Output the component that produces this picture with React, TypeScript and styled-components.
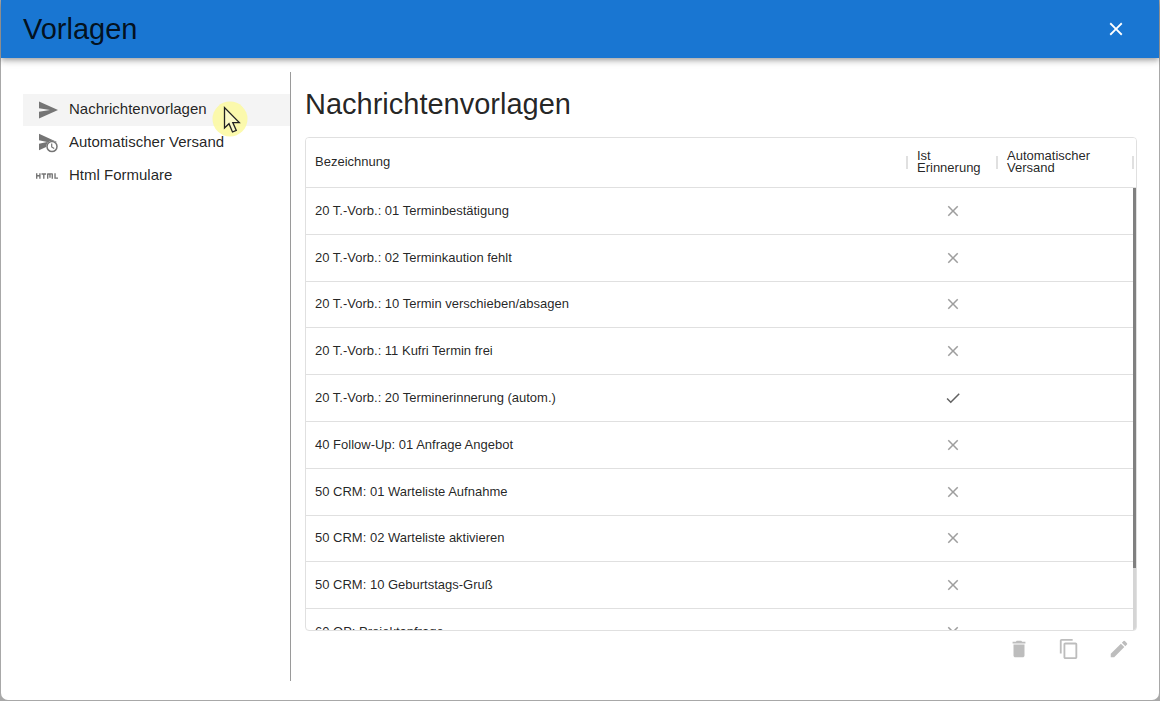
import React from "react";
import styled, { createGlobalStyle } from "styled-components";
import {
  MdCheck,
  MdClose,
  MdContentCopy,
  MdDelete,
  MdEdit,
  MdHtml,
} from "react-icons/md";

const GlobalStyle = createGlobalStyle`
  *, *::before, *::after { box-sizing: border-box; }
  html, body, #root { height: 100%; }
  body {
    margin: 0;
    background: #a8a8a8;
    font-family: "Liberation Sans", Arial, sans-serif;
    color: rgba(0, 0, 0, 0.87);
  }
`;

const Backdrop = styled.div`
  display: flex;
  height: 100%;
  padding: 0 1px 1px;
`;

const Dialog = styled.section`
  display: flex;
  flex-direction: column;
  flex: 1;
  min-width: 0;
  background: #fff;
  border-radius: 0 0 7px 7px;
`;

const AppBar = styled.header`
  display: flex;
  align-items: center;
  justify-content: space-between;
  flex-shrink: 0;
  height: 58px;
  padding: 0 25px 0 22px;
  background: #1976d2;
  box-shadow: 0 2px 4px -1px rgba(0, 0, 0, 0.2), 0 4px 5px 0 rgba(0, 0, 0, 0.14),
    0 1px 10px 0 rgba(0, 0, 0, 0.12);
`;

const Title = styled.h1`
  margin: 0;
  font-size: 29px;
  line-height: 32px;
  font-weight: 400;
`;

const IconButton = styled.button<{ $color: string }>`
  display: flex;
  align-items: center;
  justify-content: center;
  width: 36px;
  height: 36px;
  padding: 0;
  border: 0;
  background: none;
  color: ${(p) => p.$color};
  font-size: 22px;
`;

const Body = styled.div`
  display: flex;
  flex: 1;
  min-height: 0;
  padding: 14px 22px 19px;
`;

const Sidebar = styled.nav`
  display: flex;
  flex-direction: column;
  gap: 1px;
  flex: 0 0 268px;
  padding-top: 22px;
  border-right: 1px solid #9a9a9a;
`;

const NavItem = styled.a<{ $active?: boolean }>`
  position: relative;
  display: flex;
  align-items: center;
  gap: 11px;
  height: 32px;
  padding: 0 13px;
  background: ${(p) => (p.$active ? "#f4f4f4" : "transparent")};
  color: rgba(0, 0, 0, 0.87);
  font-size: 15px;
  line-height: 20px;
  text-decoration: none;

  svg {
    flex-shrink: 0;
    color: #757575;
    font-size: 22px;
  }
`;

const NavLabel = styled.span`
  padding-bottom: 2px;
`;

const Pointer = styled.svg`
  position: absolute;
  top: 7px;
  left: 189px;
  z-index: 1;
`;

const Main = styled.main`
  display: flex;
  flex-direction: column;
  flex: 1;
  min-width: 0;
  padding: 16px 0 14px 14px;
`;

const Heading = styled.h2`
  margin: 0 0 17px;
  font-size: 29px;
  line-height: 32px;
  font-weight: 400;
`;

const GridFrame = styled.div`
  position: relative;
  flex: 1;
  min-height: 0;
  overflow: hidden;
  border: 1px solid #e0e0e0;
  border-radius: 4px;
`;

const GridScroller = styled.div`
  height: 100%;
  overflow-y: auto;
  scrollbar-width: none;
`;

const Table = styled.table`
  width: 100%;
  height: 518px;
  table-layout: fixed;
  border-collapse: separate;
  border-spacing: 0;
  font-size: 13px;
`;

const HeadCell = styled.th<{ $width?: number }>`
  position: sticky;
  top: 0;
  width: ${(p) => (p.$width ? `${p.$width}px` : "auto")};
  height: 50px;
  padding: 0 9px 2px;
  border-bottom: 1px solid #e0e0e0;
  background: #fff;
  font-weight: 400;
  line-height: 12px;
  text-align: left;

  &::after {
    content: "";
    position: absolute;
    top: 18px;
    right: 0;
    width: 2px;
    height: 13px;
    background: #e0e0e0;
  }

  &:last-child::after {
    right: 2px;
  }
`;

const Cell = styled.td<{ $muted?: boolean; $center?: boolean }>`
  padding: 0 9px;
  border-bottom: 1px solid #e0e0e0;
  color: ${(p) => (p.$muted ? "#9e9e9e" : "rgba(0, 0, 0, 0.87)")};
  line-height: 18px;
  text-align: ${(p) => (p.$center ? "center" : "left")};

  svg {
    display: block;
    margin: 0 auto;
    font-size: 18px;
  }
`;

const CheckMark = styled(MdCheck)`
  color: #616161;
`;

const ScrollTrack = styled.div`
  position: absolute;
  top: 50px;
  right: 0;
  bottom: 0;
  width: 3px;
  background: #d5d5d5;
`;

const ScrollThumb = styled.div`
  height: 86%;
  background: #808080;
`;

const Actions = styled.div`
  display: flex;
  justify-content: flex-end;
  gap: 14px;
`;

const SendIcon = () => (
  <svg width="22" height="22" viewBox="0 0 22 22" fill="currentColor" aria-hidden="true">
    <path d="M3 2.6L22 11L3 19.4V12.7L14 11L3 9.3Z" />
  </svg>
);

const ScheduledSendIcon = () => (
  <svg width="22" height="22" viewBox="0 0 22 22" fill="currentColor" aria-hidden="true">
    <path d="M3 1.8L21 10L3 18.2V11.7L11 10L3 8.3Z" />
    <circle cx="16" cy="14.6" r="5.8" fill="#fff" />
    <circle cx="16" cy="14.6" r="5" fill="#fff" stroke="currentColor" strokeWidth="1.5" />
    <path d="M15.7 11.6V15L18.2 16.6" fill="none" stroke="currentColor" strokeWidth="1.2" />
  </svg>
);

const templates = [
  { name: "20 T.-Vorb.: 01 Terminbestätigung", reminder: false },
  { name: "20 T.-Vorb.: 02 Terminkaution fehlt", reminder: false },
  { name: "20 T.-Vorb.: 10 Termin verschieben/absagen", reminder: false },
  { name: "20 T.-Vorb.: 11 Kufri Termin frei", reminder: false },
  { name: "20 T.-Vorb.: 20 Terminerinnerung (autom.)", reminder: true },
  { name: "40 Follow-Up: 01 Anfrage Angebot", reminder: false },
  { name: "50 CRM: 01 Warteliste Aufnahme", reminder: false },
  { name: "50 CRM: 02 Warteliste aktivieren", reminder: false },
  { name: "50 CRM: 10 Geburtstags-Gruß", reminder: false },
  { name: "60 OP: Projektanfrage", reminder: false },
];

export default function App() {
  return (
    <>
      <GlobalStyle />
      <Backdrop>
        <Dialog role="dialog" aria-labelledby="dialog-title">
          <AppBar>
            <Title id="dialog-title">Vorlagen</Title>
            <IconButton type="button" $color="#fff" aria-label="Schließen">
              <MdClose />
            </IconButton>
          </AppBar>
          <Body>
            <Sidebar>
              <NavItem href="#nachrichten" $active>
                <SendIcon />
                <NavLabel>Nachrichtenvorlagen</NavLabel>
                <Pointer width="36" height="36" viewBox="0 0 36 36" aria-hidden="true">
                  <circle cx="18" cy="18" r="17.5" fill="#fbf99f" fillOpacity="0.85" />
                  <path
                    d="M12.5 6.5V27L17 22.7L20.5 31L24.3 29.4L20.8 21.6H27.3Z"
                    fill="#fbfac8"
                    stroke="#222"
                    strokeWidth="1.3"
                  />
                </Pointer>
              </NavItem>
              <NavItem href="#versand">
                <ScheduledSendIcon />
                <NavLabel>Automatischer Versand</NavLabel>
              </NavItem>
              <NavItem href="#formulare">
                <MdHtml />
                <NavLabel>Html Formulare</NavLabel>
              </NavItem>
            </Sidebar>
            <Main>
              <Heading>Nachrichtenvorlagen</Heading>
              <GridFrame>
                <GridScroller>
                  <Table>
                    <thead>
                      <tr>
                        <HeadCell scope="col">Bezeichnung</HeadCell>
                        <HeadCell scope="col" $width={90}>
                          Ist Erinnerung
                        </HeadCell>
                        <HeadCell scope="col" $width={138}>
                          Automatischer Versand
                        </HeadCell>
                      </tr>
                    </thead>
                    <tbody>
                      {templates.map((t) => (
                        <tr key={t.name}>
                          <Cell>{t.name}</Cell>
                          <Cell $center $muted>
                            {t.reminder ? <CheckMark /> : <MdClose />}
                          </Cell>
                          <Cell />
                        </tr>
                      ))}
                    </tbody>
                  </Table>
                </GridScroller>
                <ScrollTrack>
                  <ScrollThumb />
                </ScrollTrack>
              </GridFrame>
              <Actions>
                <IconButton type="button" $color="#bdbdbd" aria-label="Löschen">
                  <MdDelete />
                </IconButton>
                <IconButton type="button" $color="#bdbdbd" aria-label="Kopieren">
                  <MdContentCopy />
                </IconButton>
                <IconButton type="button" $color="#bdbdbd" aria-label="Bearbeiten">
                  <MdEdit />
                </IconButton>
              </Actions>
            </Main>
          </Body>
        </Dialog>
      </Backdrop>
    </>
  );
}
